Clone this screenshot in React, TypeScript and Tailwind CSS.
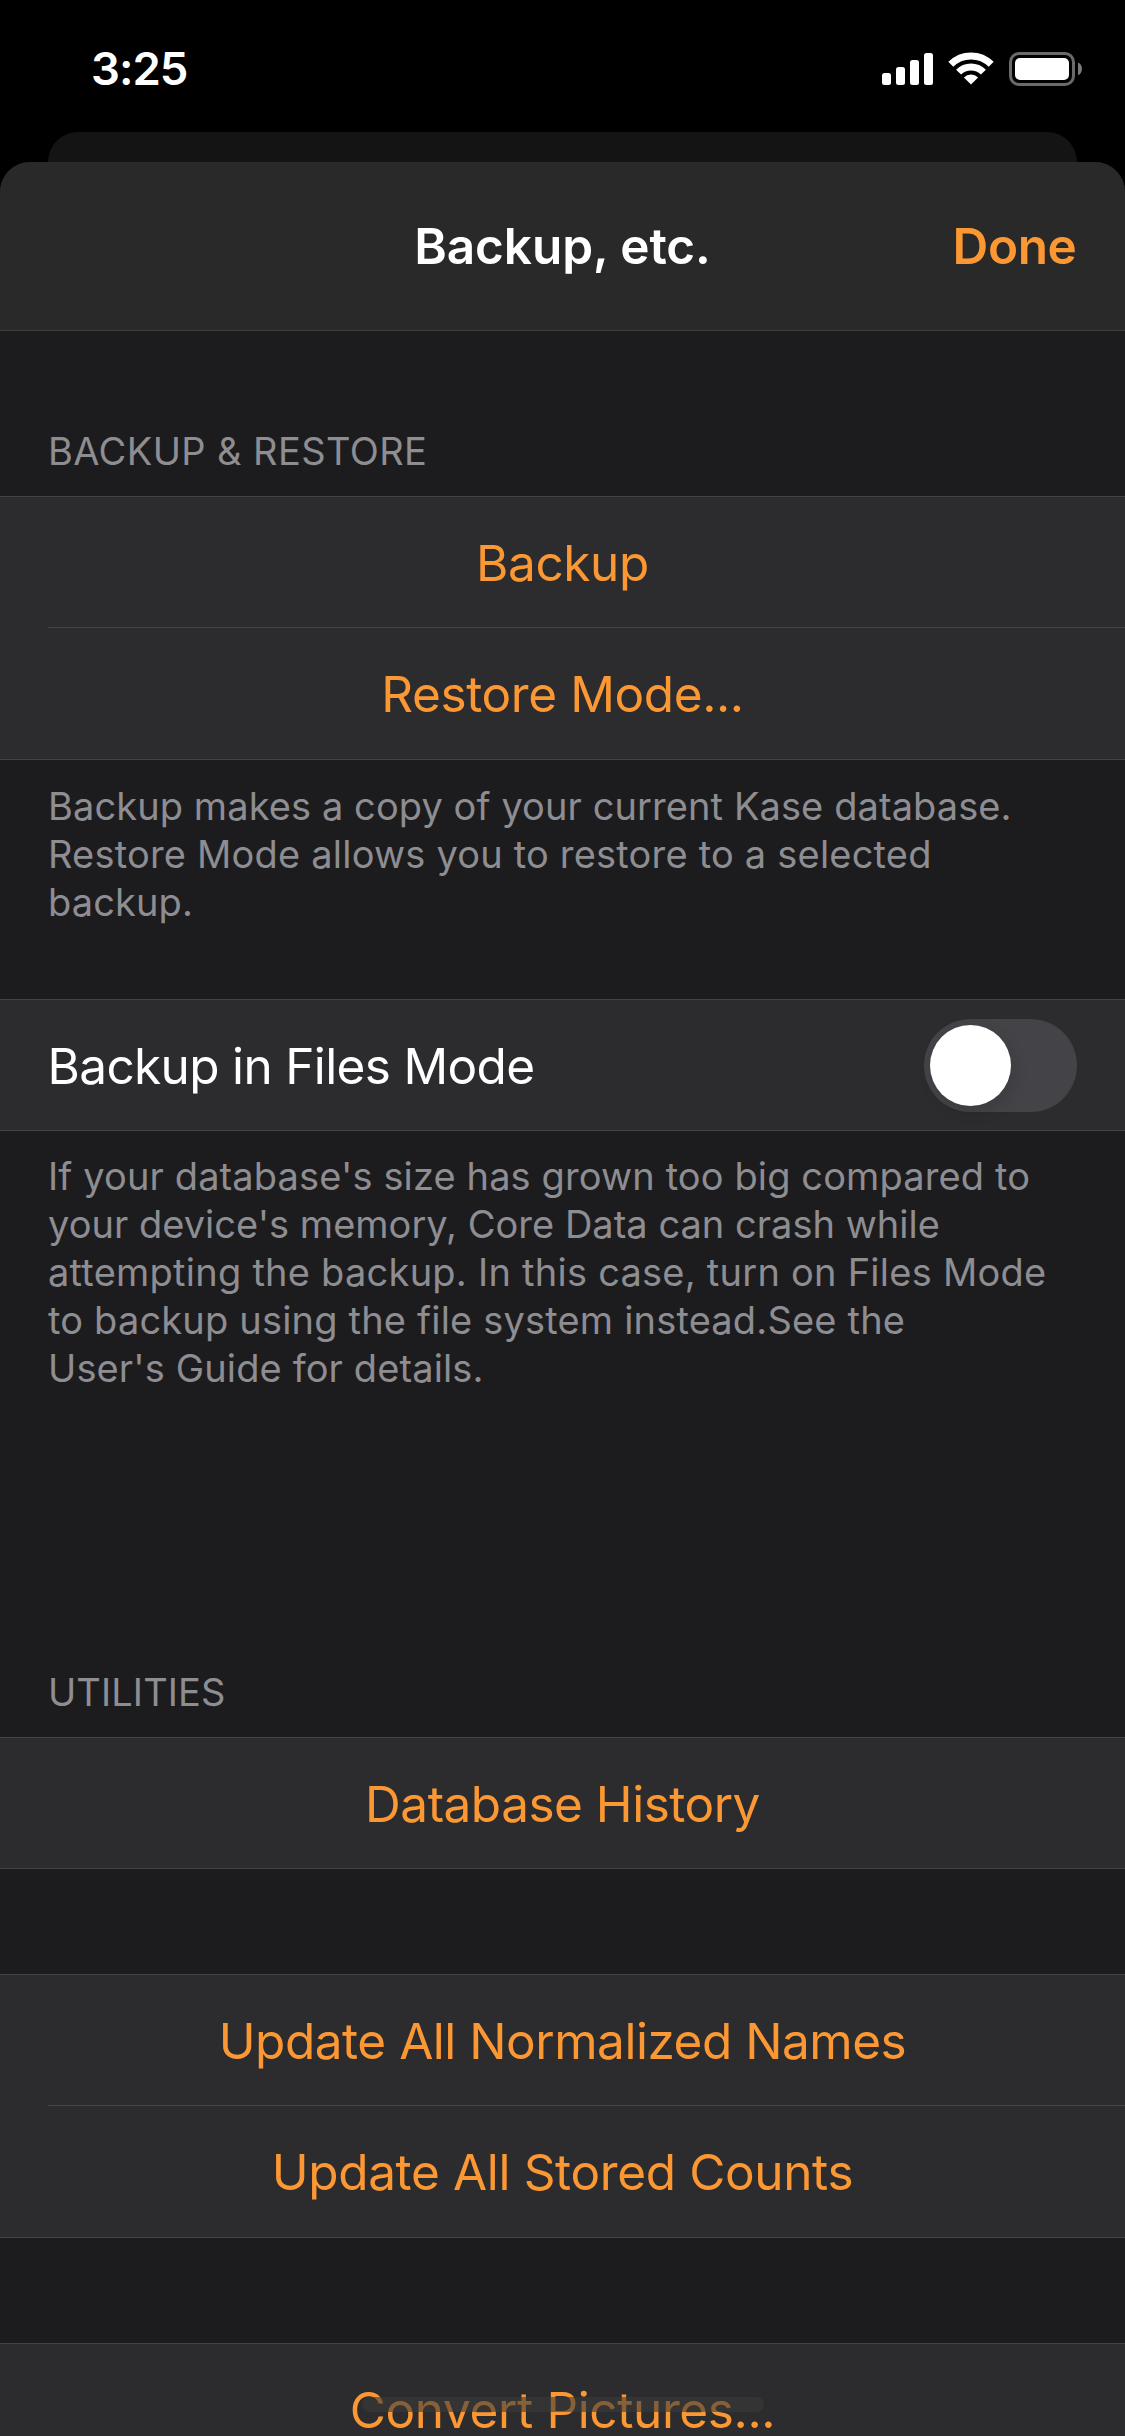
import type { ReactNode } from "react";

function StatusIcons() {
  return (
    <svg className="h-[36px] w-[204px]" viewBox="880 51 204 36" fill="none">
      <g fill="#fff">
        <rect x="882" y="73" width="9" height="12" rx="2.5" />
        <rect x="896" y="67" width="9" height="18" rx="2.5" />
        <rect x="910" y="60" width="9" height="25" rx="2.5" />
        <rect x="924" y="53" width="9" height="32" rx="2.5" />
        <path d="M971 84.6L963.9 77.5A10.2 10.2 0 0 1 978.1 77.5Z" />
      </g>
      <g stroke="#fff" strokeWidth="7">
        <path d="M958.6 72.1A17.5 17.5 0 0 1 983.4 72.1" />
        <path d="M950.8 64.3A28.5 28.5 0 0 1 991.2 64.3" />
      </g>
      <rect x="1010.5" y="53.5" width="63" height="31" rx="8.5" stroke="#6a6a6a" strokeWidth="3" />
      <rect x="1015" y="58" width="54" height="22" rx="5" fill="#fff" />
      <path d="M1078 62.5C1080.6 63.4 1082 66 1082 68.8S1080.6 74.2 1078 75.3Z" fill="#7b7b7b" />
    </svg>
  );
}

function Group({ children }: { children: ReactNode }) {
  return <section className="border-y border-[#434346] bg-[#2c2c2e]">{children}</section>;
}

function ActionRow({ label, tracking }: { label: string; tracking: string }) {
  return (
    <button
      className={`flex h-[130px] w-full items-center justify-center pt-[4px] text-[49.5px] leading-none whitespace-nowrap text-[#fb9833] ${tracking}`}
    >
      {label}
    </button>
  );
}

function Separator() {
  return <div className="ml-12 h-px bg-[#434346]" />;
}

function Header({ children, tracking }: { children: string; tracking: string }) {
  return (
    <h2 className={`mb-[21px] pl-12 text-[38px] leading-[48px] whitespace-nowrap text-[#8d8d92] ${tracking}`}>
      {children}
    </h2>
  );
}

function Footer({ lines }: { lines: [string, string][] }) {
  return (
    <div className="pl-12 text-[38px] leading-[48px] whitespace-nowrap text-[#8d8d92]">
      {lines.map(([text, tracking]) => (
        <p key={text} className={tracking}>
          {text}
        </p>
      ))}
    </div>
  );
}

export default function App() {
  return (
    <div className="relative h-[2436px] w-[1125px] overflow-hidden bg-black font-['Inter',sans-serif]">
      <div className="flex h-[132px] items-start justify-between pr-[41px] pl-[91px]">
        <span className="mt-[45px] text-[45.5px] leading-[48px] font-semibold tracking-[-1px] text-white">3:25</span>
        <div className="mt-[51px]">
          <StatusIcons />
        </div>
      </div>
      <div className="mx-12 h-[60px] rounded-t-[30px] bg-[#141414]" />

      <main className="relative -mt-[30px] flex h-[2274px] flex-col overflow-hidden rounded-t-[30px] bg-[#1c1c1e]">
        <header className="grid h-[169px] shrink-0 grid-cols-[1fr_auto_1fr] items-center border-b border-[#3f3f40] bg-[#292929] pt-[2px] text-[49.5px] leading-none font-semibold">
          <span />
          <h1 className="tracking-[-0.06px] text-white">Backup, etc.</h1>
          <button className="justify-self-end pr-[48.5px] tracking-[-0.39px] text-[#fb9833]">Done</button>
        </header>

        <div className="mt-[96px] flex shrink-0 flex-col">
          <Header tracking="tracking-[0.4px]">BACKUP &amp; RESTORE</Header>
          <Group>
            <ActionRow label="Backup" tracking="tracking-[-0.4px]" />
            <Separator />
            <div className="pb-px">
              <ActionRow label="Restore Mode..." tracking="tracking-[-0.4px]" />
            </div>
          </Group>
          <div className="mt-[22px] mb-[73px]">
            <Footer
              lines={[
                ["Backup makes a copy of your current Kase database.", "tracking-[0.09px]"],
                ["Restore Mode allows you to restore to a selected", "tracking-[0.2px]"],
                ["backup.", "tracking-[0.1px]"],
              ]}
            />
          </div>
          <Group>
            <div className="flex h-[130px] items-center justify-between pr-12 pl-[47.5px]">
              <span className="pt-[3px] text-[49.5px] leading-none tracking-[-0.65px] text-white">
                Backup in Files Mode
              </span>
              <button
                role="switch"
                aria-checked="false"
                aria-label="Backup in Files Mode"
                className="flex h-[93px] w-[153px] items-center rounded-full bg-[#434348] pl-[6px]"
              >
                <span className="size-[81px] rounded-full bg-white shadow-[3px_6px_16px_rgba(0,0,0,0.12)]" />
              </button>
            </div>
          </Group>
          <div className="mt-[21px] mb-[276px]">
            <Footer
              lines={[
                ["If your database's size has grown too big compared to", "tracking-[0.12px]"],
                ["your device's memory, Core Data can crash while", "tracking-[0.02px]"],
                ["attempting the backup. In this case, turn on Files Mode", "tracking-[0.245px]"],
                ["to backup using the file system instead.See the", "tracking-[0.18px]"],
                ["User's Guide for details.", "tracking-[0.12px]"],
              ]}
            />
          </div>
          <Header tracking="tracking-[0.09px]">UTILITIES</Header>
          <Group>
            <ActionRow label="Database History" tracking="tracking-[-0.5px]" />
          </Group>
          <div className="h-[105px]" />
          <Group>
            <ActionRow label="Update All Normalized Names" tracking="tracking-[-0.48px]" />
            <Separator />
            <div className="pb-px">
              <ActionRow label="Update All Stored Counts" tracking="tracking-[-0.36px]" />
            </div>
          </Group>
          <div className="h-[105px]" />
          <Group>
            <ActionRow label="Convert Pictures..." tracking="tracking-[-0.37px]" />
          </Group>
        </div>
      </main>
      <div className="absolute bottom-[24px] left-[362px] h-[15px] w-[402px] rounded-full bg-[#3b3b3b]/60" />
    </div>
  );
}
